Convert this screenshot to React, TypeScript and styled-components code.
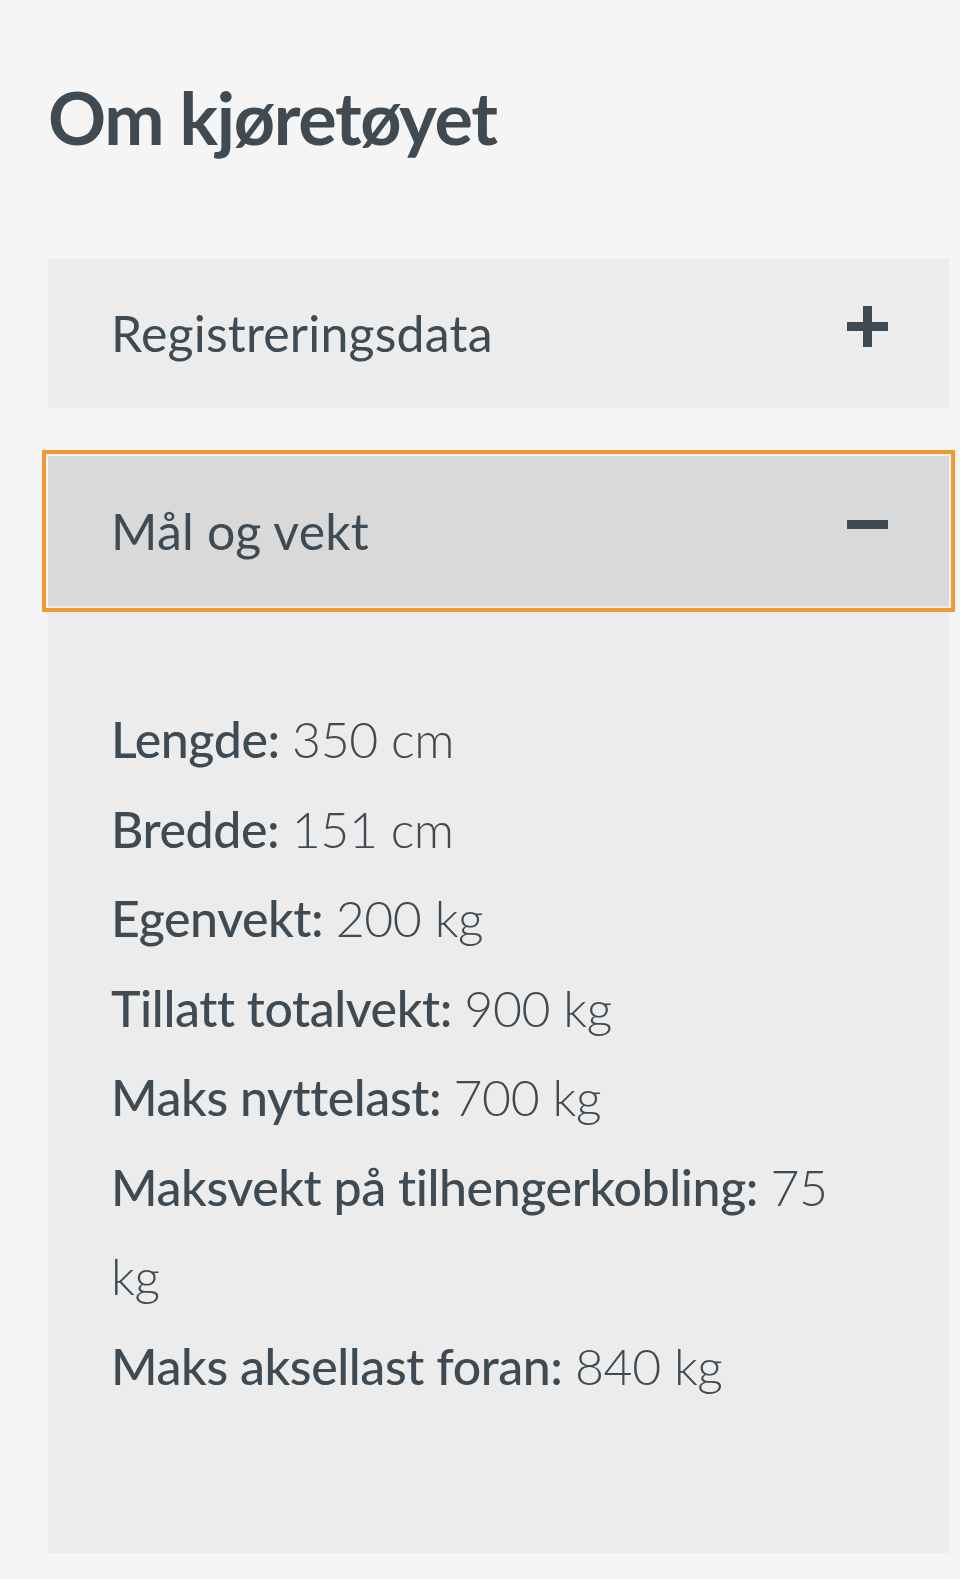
import * as React from "react";
import styled, { createGlobalStyle } from "styled-components";

interface Measure {
  label: string;
  value: string;
}

interface Section {
  id: string;
  title: string;
  items: Measure[];
}

const GlobalStyle = createGlobalStyle`
  body {
    margin: 0;
    background: #f5f5f5;
    font-family: Lato, "Noto Sans", sans-serif;
    color: #3f4a52;
  }
`;

const Page = styled.div`
  padding: 74px 11px 26px 48px;
`;

const Title = styled.h2`
  margin: 0 0 98px 0;
  font-size: 72px;
  line-height: 1.2;
  font-weight: 700;
  letter-spacing: -1.3px;
  color: #3f4a52;
`;

const Accordion = styled.div`
  display: flex;
  flex-direction: column;
  gap: 48px;
`;

const Item = styled.div`
  background: #ececec;
`;

const Header = styled.button<{ open: boolean }>`
  display: flex;
  width: 100%;
  height: 150px;
  align-items: center;
  justify-content: space-between;
  padding: 0 61px 0 63px;
  border: none;
  background: ${({ open }) => (open ? "#d9d9d9" : "#ececec")};
  outline: ${({ open }) => (open ? "4px solid #f29a30" : "none")};
  outline-offset: 2px;
  font-family: Lato, "Noto Sans", sans-serif;
  font-size: 50px;
  font-weight: 400;
  line-height: 1.2;
  letter-spacing: 0.2px;
  color: #3f4a52;
  text-align: left;
  cursor: pointer;
`;

const Icon = styled.svg`
  width: 41px;
  height: 41px;
  margin-top: -14px;
  flex-shrink: 0;
`;

const Content = styled.div`
  padding: 89px 90px 142px 63px;
`;

const Row = styled.div`
  font-size: 50px;
  line-height: 89.5px;
  letter-spacing: -0.4px;
  color: #3f4a52;
`;

const Label = styled.span`
  font-weight: 500;
`;

const Value = styled.span`
  font-weight: 300;
`;

const sections: Section[] = [
  { id: "reg", title: "Registreringsdata", items: [] },
  {
    id: "maal",
    title: "Mål og vekt",
    items: [
      { label: "Lengde:", value: "350 cm" },
      { label: "Bredde:", value: "151 cm" },
      { label: "Egenvekt:", value: "200 kg" },
      { label: "Tillatt totalvekt:", value: "900 kg" },
      { label: "Maks nyttelast:", value: "700 kg" },
      { label: "Maksvekt på tilhengerkobling:", value: "75 kg" },
      { label: "Maks aksellast foran:", value: "840 kg" },
    ],
  },
];

const ToggleIcon = ({ open }: { open: boolean }) => (
  <Icon viewBox="0 0 41 41" aria-hidden="true">
    <rect x="0" y="16" width="41" height="9" fill="#3f4a52" />
    {!open && <rect x="16" y="0" width="9" height="41" fill="#3f4a52" />}
  </Icon>
);

const App = () => {
  const [openId, setOpenId] = React.useState<string | null>("maal");

  return (
    <Page>
      <GlobalStyle />
      <Title>Om kjøretøyet</Title>
      <Accordion>
        {sections.map((section) => {
          const open = openId === section.id;
          return (
            <Item key={section.id}>
              <Header
                open={open}
                onClick={() => setOpenId(open ? null : section.id)}
              >
                <span>{section.title}</span>
                <ToggleIcon open={open} />
              </Header>
              {open && (
                <Content>
                  {section.items.map((item) => (
                    <Row key={item.label}>
                      <Label>{item.label}</Label> <Value>{item.value}</Value>
                    </Row>
                  ))}
                </Content>
              )}
            </Item>
          );
        })}
      </Accordion>
    </Page>
  );
};

export default App;
